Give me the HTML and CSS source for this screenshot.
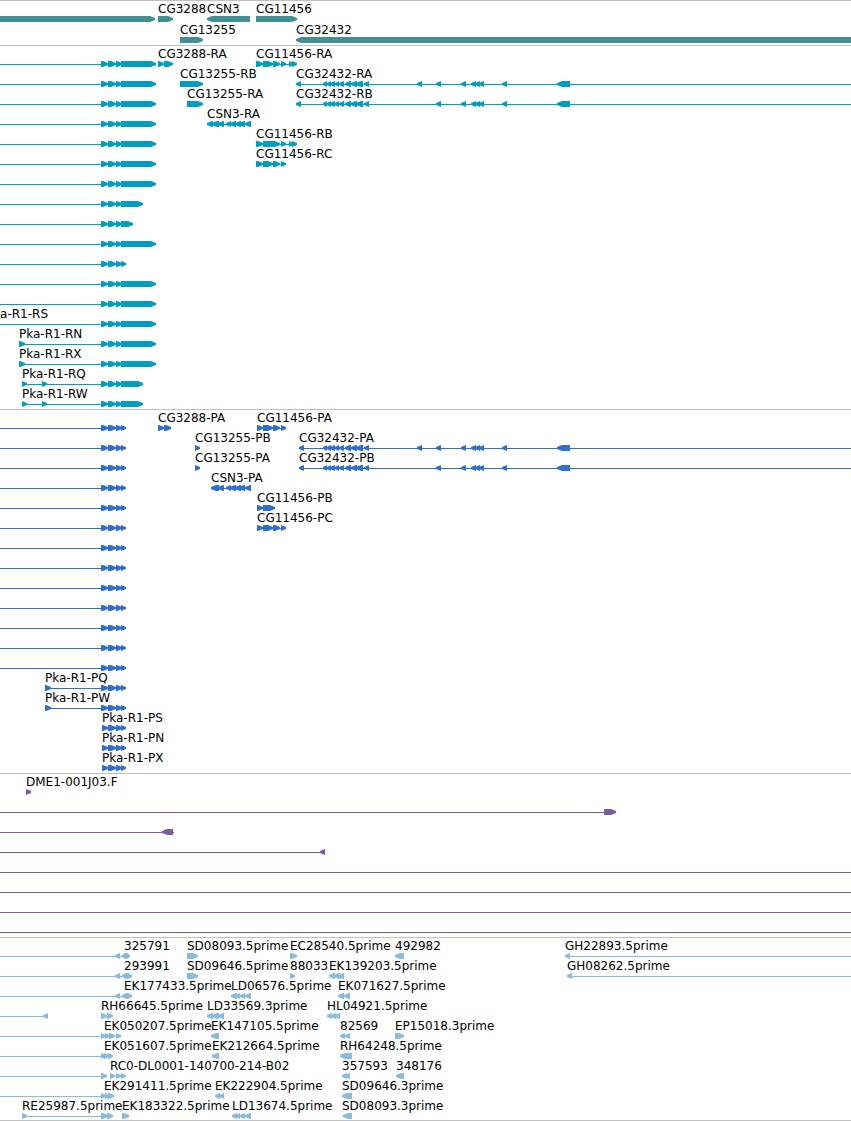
FILE: index.html
```html
<!DOCTYPE html>
<html lang="en">
<head>
<meta charset="utf-8">
<title>Pka-R1 region</title>
<link rel="stylesheet" href="styles.css">
</head>
<body>
<main class="browser">

<section class="track genes">
<svg class="lane">
<defs>
<path id="exons" d="M101 14h2l5 2v2l-5 2h-2zM108 14h3l5 2v2l-5 2h-3zM116 14h1l5 2v2l-5 2h-1z"/>
<path id="intron" d="M0 17h122v1H0z"/>
<path id="end-long" d="M121 14h30l5 2v2l-5 2h-30z"/>
<path id="end-mid" d="M121 14h17l5 2v2l-5 2h-17z"/>
<path id="end-short" d="M121 14h7l5 2v2l-5 2h-7z"/>
<path id="end-stop" d="M121 14l5 2v2l-5 2z"/>
<g id="tx-long"><use href="#intron"/><use href="#exons"/><use href="#end-long"/></g>
<g id="tx-mid"><use href="#intron"/><use href="#exons"/><use href="#end-mid"/></g>
<g id="tx-short"><use href="#intron"/><use href="#exons"/><use href="#end-short"/></g>
<g id="tx-stop"><use href="#intron"/><use href="#exons"/><use href="#end-stop"/></g>
<path id="csn3-exons" d="M212 16l5-2h2v6h-2l-5-2zM218 16l5-2h1v6h-1l-5-2zM226 16l5-2v6l-5-2zM230 16l5-2h1v6h-1l-5-2zM235 16l5-2h1v6h-1l-5-2zM239 16l5-2h1v6h-1l-5-2zM245 16l5-2h1v6h-1l-5-2zM212 17h38v1h-38z"/>
<path id="cg32432-exons" d="M323 16l4-2v6l-4-2zM327 16l4-2v6l-4-2zM330 16l5-2v6l-5-2zM335 16l4-2v6l-4-2zM339 16l5-2v6l-5-2zM345 16l5-2h1v6h-1l-5-2zM351 16l5-2h1v6h-1l-5-2zM356 16l5-2h2v6h-2l-5-2zM364 16l5-2v6l-5-2zM436 16l5-2v6l-5-2zM461 16l5-2v6l-5-2zM471 16l5-2v6l-5-2zM475 16l5-2v6l-5-2zM479 16l5-2v6l-5-2zM502 16l5-2v6l-5-2zM557 16l5-2h8v6h-8l-5-2z"/>
<path id="cg32432-extra" d="M417 16l5-2v6l-5-2z"/>
<path id="cg11456-tail" d="M263 14h5l5 2v2l-5 2h-5zM273 14h2l5 2v2l-5 2h-2zM281 14l5 2v2l-5 2zM260 17h22v1h-22z"/>
<path id="cg11456-end" d="M289 14l4 2v2l-4 2zM292 14l5 2v2l-5 2zM280 17h13v1h-13z"/>
<path id="ld-exons" d="M236 16l4-2v6l-4-2zM240 16l5-2v6l-5-2zM245 16l5-2h1v6h-1l-5-2z"/>
</defs>
<path d="M0 14h150l5 2v2l-5 2H0zM158 14h10l5 2v2l-5 2h-10zM207 16l5-2h38v6h-38l-5-2zM256 14h36l5 2v2l-5 2h-36z"/>
<text x="158" y="11">CG3288</text><text x="207" y="11">CSN3</text><text x="256" y="11">CG11456</text>
</svg>
<svg class="lane">
<path d="M180 14h18l5 2v2l-5 2h-18zM296 16l5-2v6l-5-2z"/><rect x="301" y="14" width="100%" height="6"/>
<text x="180" y="11">CG13255</text><text x="296" y="11">CG32432</text>
</svg>
</section>

<section class="track transcripts">
<svg class="lane"><use href="#tx-long"/>
<path d="M158 14h1l5 2v2l-5 2h-1zM164 14h4l5 2v2l-5 2h-4zM158 17h8v1h-8z"/><text x="158" y="11">CG3288-RA</text>
<path d="M256 14h2l5 2v2l-5 2h-2z"/><use href="#cg11456-tail"/><use href="#cg11456-end"/><text x="256" y="11">CG11456-RA</text></svg>
<svg class="lane"><use href="#tx-long"/>
<path d="M180 14h18l5 2v2l-5 2h-18z"/><text x="180" y="11">CG13255-RB</text>
<rect x="298" y="17" width="100%" height="1"/><path d="M296 16l5-2v6l-5-2z"/><use href="#cg32432-exons"/><use href="#cg32432-extra"/><text x="296" y="11">CG32432-RA</text></svg>
<svg class="lane"><use href="#tx-long"/>
<path d="M187 14h11l5 2v2l-5 2h-11z"/><text x="187" y="11">CG13255-RA</text>
<rect x="298" y="17" width="100%" height="1"/><path d="M296 16l5-2v6l-5-2z"/><use href="#cg32432-exons"/><text x="296" y="11">CG32432-RB</text></svg>
<svg class="lane"><use href="#tx-long"/>
<path d="M207 16l5-2h1v6h-1l-5-2z"/><use href="#csn3-exons"/><text x="207" y="11">CSN3-RA</text></svg>
<svg class="lane"><use href="#tx-long"/>
<path d="M256 14h2l5 2v2l-5 2h-2zM263 14h12l5 2v2l-5 2h-12zM281 14l5 2v2l-5 2zM260 17h22v1h-22z"/><use href="#cg11456-end"/><text x="256" y="11">CG11456-RB</text></svg>
<svg class="lane"><use href="#tx-long"/>
<path d="M256 14h2l5 2v2l-5 2h-2z"/><use href="#cg11456-tail"/><text x="256" y="11">CG11456-RC</text></svg>
<svg class="lane"><use href="#tx-long"/></svg>
<svg class="lane"><use href="#tx-mid"/></svg>
<svg class="lane"><use href="#tx-short"/></svg>
<svg class="lane"><use href="#tx-long"/></svg>
<svg class="lane"><use href="#tx-stop"/></svg>
<svg class="lane"><use href="#tx-long"/></svg>
<svg class="lane"><use href="#tx-long"/></svg>
<svg class="lane"><use href="#tx-long"/><text class="ends" x="48" y="11">Pka-R1-RS</text></svg>
<svg class="lane"><path d="M19 14h1l5 2v2l-5 2h-1zM20 17h102v1H20z"/><use href="#exons"/><use href="#end-long"/><text x="19" y="11">Pka-R1-RN</text></svg>
<svg class="lane"><path d="M19 14h1l5 2v2l-5 2h-1zM20 17h102v1H20z"/><use href="#exons"/><use href="#end-long"/><text x="19" y="11">Pka-R1-RX</text></svg>
<svg class="lane"><path d="M22 14l5 2v2l-5 2zM42 14l5 2v2l-5 2zM22 17h100v1H22z"/><use href="#exons"/><use href="#end-mid"/><text x="22" y="11">Pka-R1-RQ</text></svg>
<svg class="lane"><path d="M22 14l5 2v2l-5 2zM42 14l5 2v2l-5 2zM22 17h100v1H22z"/><use href="#exons"/><use href="#end-mid"/><text x="22" y="11">Pka-R1-RW</text></svg>
</section>

<section class="track proteins">
<svg class="lane"><use href="#tx-stop"/>
<path d="M158 14h1l5 2v2l-5 2h-1zM164 14h2l5 2v2l-5 2h-2zM158 17h8v1h-8z"/><text x="158" y="11">CG3288-PA</text>
<path d="M257 14h1l5 2v2l-5 2h-1z"/><use href="#cg11456-tail"/><text x="257" y="11">CG11456-PA</text></svg>
<svg class="lane"><use href="#tx-stop"/>
<path d="M195 14l5 2v2l-5 2z"/><text x="195" y="11">CG13255-PB</text>
<rect x="301" y="17" width="100%" height="1"/><path d="M299 16l5-2v6l-5-2z"/><use href="#cg32432-exons"/><use href="#cg32432-extra"/><text x="299" y="11">CG32432-PA</text></svg>
<svg class="lane"><use href="#tx-stop"/>
<path d="M195 14l5 2v2l-5 2z"/><text x="195" y="11">CG13255-PA</text>
<rect x="301" y="17" width="100%" height="1"/><path d="M299 16l5-2v6l-5-2z"/><use href="#cg32432-exons"/><text x="299" y="11">CG32432-PB</text></svg>
<svg class="lane"><use href="#tx-stop"/>
<path d="M211 16l5-2h3v6h-3l-5-2z"/><use href="#csn3-exons"/><text x="211" y="11">CSN3-PA</text></svg>
<svg class="lane"><use href="#tx-stop"/>
<path d="M257 14h1l5 2v2l-5 2h-1zM263 14h7l5 2v2l-5 2h-7zM258 17h8v1h-8z"/><text x="257" y="11">CG11456-PB</text></svg>
<svg class="lane"><use href="#tx-stop"/>
<path d="M257 14h1l5 2v2l-5 2h-1z"/><use href="#cg11456-tail"/><text x="257" y="11">CG11456-PC</text></svg>
<svg class="lane"><use href="#tx-stop"/></svg>
<svg class="lane"><use href="#tx-stop"/></svg>
<svg class="lane"><use href="#tx-stop"/></svg>
<svg class="lane"><use href="#tx-stop"/></svg>
<svg class="lane"><use href="#tx-stop"/></svg>
<svg class="lane"><use href="#tx-stop"/></svg>
<svg class="lane"><use href="#tx-stop"/></svg>
<svg class="lane"><path d="M45 14h1l5 2v2l-5 2h-1zM46 17h76v1H46z"/><use href="#exons"/><use href="#end-stop"/><text x="45" y="11">Pka-R1-PQ</text></svg>
<svg class="lane"><path d="M45 14h1l5 2v2l-5 2h-1zM46 17h76v1H46z"/><use href="#exons"/><use href="#end-stop"/><text x="45" y="11">Pka-R1-PW</text></svg>
<svg class="lane"><path id="exons-inner" d="M102 14h1l5 2v2l-5 2h-1zM108 14h3l5 2v2l-5 2h-3zM116 14h1l5 2v2l-5 2h-1zM102 17h20v1h-20z"/><use href="#end-stop"/><text x="102" y="11">Pka-R1-PS</text></svg>
<svg class="lane"><use href="#exons-inner"/><use href="#end-stop"/><text x="102" y="11">Pka-R1-PN</text></svg>
<svg class="lane"><use href="#exons-inner"/><use href="#end-stop"/><text x="102" y="11">Pka-R1-PX</text></svg>
</section>

<section class="track clones">
<svg class="lane"><path d="M26 14l5 2v2l-5 2z"/><text x="26" y="11">DME1-001J03.F</text></svg>
<svg class="lane"><path d="M0 17h606v1H0zM604 14h7l5 2v2l-5 2h-7z"/></svg>
<svg class="lane"><path d="M0 17h174v1H0zM162 16l5-2h6v6h-6l-5-2z"/></svg>
<svg class="lane"><path d="M0 17h325v1H0zM320 16l5-2v6l-5-2z"/></svg>
<svg class="lane"><rect y="17" width="100%" height="1"/></svg>
<svg class="lane"><rect y="17" width="100%" height="1"/></svg>
<svg class="lane"><rect y="17" width="100%" height="1"/></svg>
<svg class="lane"><rect y="17" width="100%" height="1"/></svg>
</section>

<section class="track ests">
<svg class="lane">
<path d="M0 17h125v1H0zM115 16l5-2v6l-5-2zM122 16l3-2h2l3 2v2l-3 2h-2l-3-2zM187 14h6l5 2v2l-5 2h-6zM290 14h2l5 2v2l-5 2h-2zM395 16l5-2h4v6h-4l-5-2zM565 16l5-2v6l-5-2z"/><rect x="567" y="17" width="100%" height="1"/>
<text x="124" y="11">325791</text><text x="187" y="11">SD08093.5prime</text><text x="290" y="11">EC28540.5prime</text><text x="395" y="11">492982</text><text x="565" y="11">GH22893.5prime</text></svg>
<svg class="lane">
<path d="M0 17h125v1H0zM115 16l5-2v6l-5-2zM122 16l4-2h2l4 2v2l-4 2h-2l-4-2zM187 14h6l5 2v2l-5 2h-6zM290 14l5 2v2l-5 2zM329 16l5-2h1v6h-1l-5-2zM334 16l5-2h1v6h-1l-5-2zM338 16l5-2h1v6h-1l-5-2zM567 16l5-2v6l-5-2z"/><rect x="569" y="17" width="100%" height="1"/>
<text x="124" y="11">293991</text><text x="187" y="11">SD09646.5prime</text><text x="290" y="11">88033</text><text x="329" y="11">EK139203.5prime</text><text x="567" y="11">GH08262.5prime</text></svg>
<svg class="lane">
<path d="M0 17h125v1H0zM115 16l5-2v6l-5-2zM122 16l4-2h2l4 2v2l-4 2h-2l-4-2zM231 16l5-2h1v6h-1l-5-2zM338 16l5-2h1v6h-1l-5-2zM344 16l5-2h1v6h-1l-5-2z"/><use href="#ld-exons"/>
<text x="124" y="11">EK177433.5prime</text><text x="231" y="11">LD06576.5prime</text><text x="338" y="11">EK071627.5prime</text></svg>
<svg class="lane">
<path d="M0 17h46v1H0zM43 16l5-2v6l-5-2zM101 14h1l5 2v2l-5 2h-1zM107 14h1l5 2v2l-5 2h-1zM101 17h8v1h-8zM207 16l5-2h1v6h-1l-5-2zM212 16l5-2h2v6h-2l-5-2zM218 16l5-2h1v6h-1l-5-2zM327 16l5-2v6l-5-2zM331 16l5-2v6l-5-2zM335 16l5-2v6l-5-2z"/>
<text x="101" y="11">RH66645.5prime</text><text x="207" y="11">LD33569.3prime</text><text x="327" y="11">HL04921.5prime</text></svg>
<svg class="lane">
<path d="M0 17h118v1H0zM101 14l5 2v2l-5 2zM105 14l5 2v2l-5 2zM109 14h1l5 2v2l-5 2h-1zM116 14l5 2v2l-5 2zM211 16l5-2h3v6h-3l-5-2zM340 16l5-2v6l-5-2zM345 16l5-2v6l-5-2zM395 14h4l5 2v2l-5 2h-4z"/>
<text x="104" y="11">EK050207.5prime</text><text x="211" y="11">EK147105.5prime</text><text x="340" y="11">82569</text><text x="395" y="11">EP15018.3prime</text></svg>
<svg class="lane">
<path d="M0 17h110v1H0zM101 14l5 2v2l-5 2zM104 14l5 2v2l-5 2zM108 14l5 2v2l-5 2zM212 16l5-2h2v6h-2l-5-2zM340 16l5-2h7v6h-7l-5-2z"/>
<text x="104" y="11">EK051607.5prime</text><text x="212" y="11">EK212664.5prime</text><text x="340" y="11">RH64248.5prime</text></svg>
<svg class="lane">
<path d="M0 17h104v1H0zM101 14h1l5 2v2l-5 2h-1zM110 14l5 2v2l-5 2zM116 14l5 2v2l-5 2zM121 14l5 2v2l-5 2zM110 17h12v1h-12zM342 16l5-2v6l-5-2zM345 16l5-2v6l-5-2zM396 16l5-2h3v6h-3l-5-2z"/>
<text x="110" y="11">RC0-DL0001-140700-214-B02</text><text x="342" y="11">357593</text><text x="396" y="11">348176</text></svg>
<svg class="lane">
<path d="M0 17h110v1H0zM101 14l5 2v2l-5 2zM105 14l5 2v2l-5 2zM108 14h1l5 2v2l-5 2h-1zM215 16l5-2v6l-5-2zM219 16l5-2v6l-5-2zM342 16l5-2h5v6h-5l-5-2z"/>
<text x="104" y="11">EK291411.5prime</text><text x="215" y="11">EK222904.5prime</text><text x="342" y="11">SD09646.3prime</text></svg>
<svg class="lane">
<path d="M22 14l5 2v2l-5 2zM22 17h88v1H22zM101 14h2l5 2v2l-5 2h-2zM107 14h1l5 2v2l-5 2h-1zM122 14h2l5 2v2l-5 2h-2zM232 16l5-2v6l-5-2zM343 16l5-2h4v6h-4l-5-2z"/><use href="#ld-exons"/>
<text x="22" y="11">RE25987.5prime</text><text x="122" y="11">EK183322.5prime</text><text x="232" y="11">LD13674.5prime</text><text x="342" y="11">SD08093.3prime</text></svg>
</section>

</main>
</body>
</html>
```

FILE: styles.css
```css
body {
  margin: 0;
  background: #fff;
}

.browser {
  display: flex;
  flex-direction: column;
}

.track {
  display: flex;
  flex-direction: column;
  padding: 1px 0 2px;
  border-top: 1px solid #c0c0c0;
}

.lane {
  display: block;
  width: 100%;
  height: 20px;
  font-family: "DejaVu Sans", "Noto Sans", sans-serif;
  font-size: 12px;
}

.lane text {
  fill: #000;
}

.lane .ends {
  text-anchor: end;
}

.genes {
  padding-bottom: 1px;
  fill: #3f8f95;
}

.genes .lane {
  height: 21px;
}

.transcripts {
  fill: #009fc0;
}

.proteins {
  fill: #306fd0;
}

.clones {
  fill: #7a5aa9;
}

.ests {
  padding-bottom: 1px;
  border-bottom: 1px solid #c0c0c0;
  fill: #87bcdf;
}
```
